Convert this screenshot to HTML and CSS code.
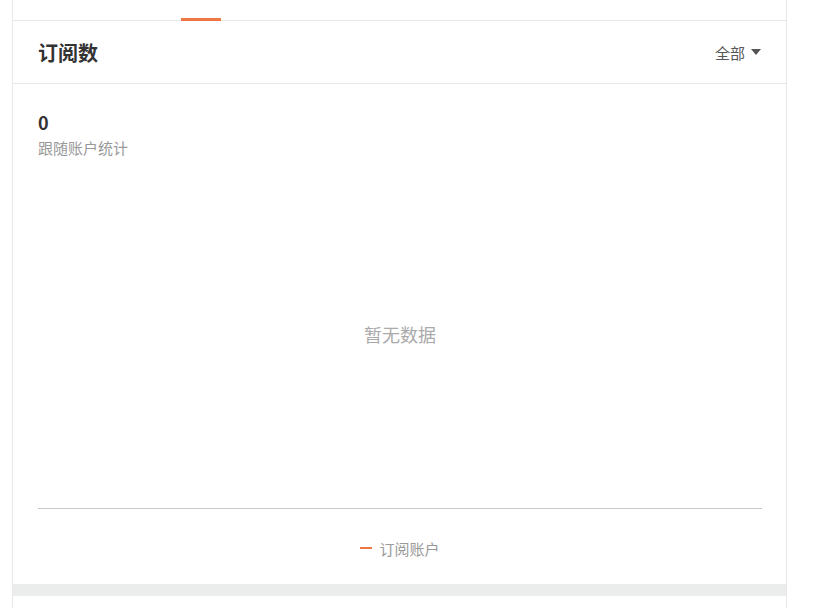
FILE: index.html
```html
<!DOCTYPE html>
<html lang="zh-CN">
<head>
    <meta charset="UTF-8">
    <meta name="viewport" content="width=device-width, initial-scale=1.0">
    <title>订阅数</title>
    <link rel="stylesheet" href="styles.css">
</head>
<body>
    <div class="panel">
        <div class="tabs">
            <a href="#" class="tab">概览</a>
            <a href="#" class="tab active">订阅</a>
        </div>

        <div class="card-head">
            <h2>订阅数</h2>
            <div class="filter">全部 <span class="caret"></span></div>
        </div>

        <div class="card-body">
            <div class="stat">0</div>
            <div class="stat-label">跟随账户统计</div>

            <div class="chart">
                <div class="empty">暂无数据</div>
            </div>
            <div class="legend">
                <span class="legend-mark"></span>
                <span class="legend-text">订阅账户</span>
            </div>
        </div>

        <div class="divider"></div>
        <div class="next-card"></div>
    </div>
</body>
</html>
```

FILE: styles.css
```css
body {
    font-family: "Noto Sans CJK SC", "Noto Sans", sans-serif;
    margin: 0;
    background: #fff;
    color: #333;
}
.panel {
    width: 773px;
    margin-left: 12px;
    border-left: 1px solid #e8e8e8;
    border-right: 1px solid #e8e8e8;
}
.tabs {
    display: flex;
    height: 40px;
    margin-top: -20px;
    padding-left: 25px;
    border-bottom: 1px solid #e8e8e8;
}
.tab {
    width: 40px;
    text-align: center;
    font-size: 14px;
    line-height: 22px;
    color: #333;
    text-decoration: none;
    margin-right: 103px;
    box-sizing: border-box;
}
.tab.active {
    color: #ee7744;
    border-bottom: 3px solid #ee7744;
    height: 41px;
    margin-bottom: -1px;
}
.card-head {
    display: flex;
    justify-content: space-between;
    align-items: center;
    height: 62px;
    padding: 0 25px;
    border-bottom: 1px solid #e8e8e8;
}
.card-head h2 {
    margin: 0;
    font-size: 20px;
    font-weight: bold;
    color: #333;
}
.filter {
    font-size: 15px;
    color: #555;
    display: flex;
    align-items: center;
}
.caret {
    margin-left: 6px;
    width: 0;
    height: 0;
    border-left: 5px solid transparent;
    border-right: 5px solid transparent;
    border-top: 6px solid #555;
}
.card-body {
    padding: 25px 24px 0 25px;
}
.stat {
    font-size: 18px;
    font-weight: bold;
    line-height: 26px;
    color: #333;
}
.stat-label {
    font-size: 15px;
    line-height: 22px;
    margin-top: 2px;
    color: #999;
}
.chart {
    height: 349px;
    border-bottom: 1px solid #c8c8c8;
    display: flex;
    align-items: center;
    justify-content: center;
}
.empty {
    font-size: 18px;
    color: #aaa;
}
.legend {
    height: 75px;
    padding-top: 3px;
    box-sizing: border-box;
    display: flex;
    align-items: center;
    justify-content: center;
    gap: 7px;
}
.legend-mark {
    width: 12px;
    height: 2px;
    background: #ee7744;
}
.legend-text {
    font-size: 15px;
    color: #999;
}
.divider {
    height: 12px;
    background: #ebecec;
}
.next-card {
    height: 40px;
}
```
